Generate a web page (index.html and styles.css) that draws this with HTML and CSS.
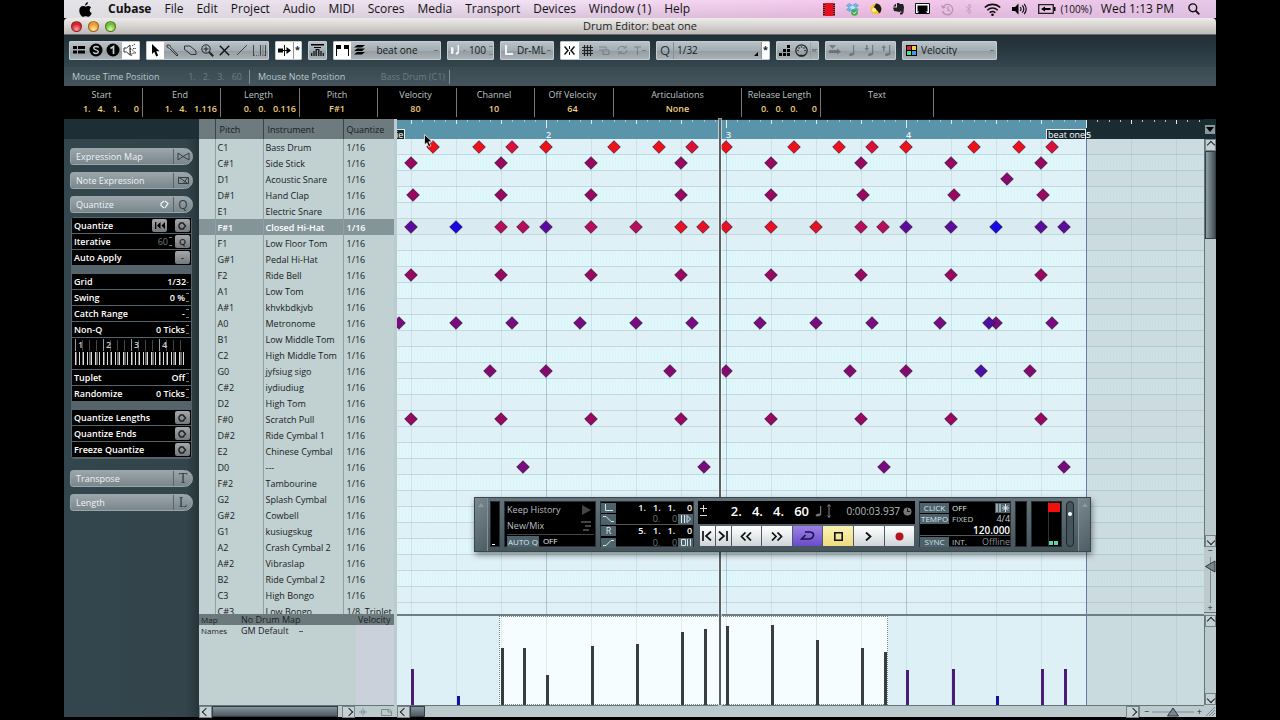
FILE: index.html
```html
<!DOCTYPE html>
<html lang="en">
<head>
<meta charset="utf-8">
<title>Drum Editor: beat one</title>
<link rel="stylesheet" href="styles.css">
</head>
<body>
<div class="desktop">
<header class="menubar">
  <svg class="apple" width="13" height="15" viewBox="0 0 13 15"><path d="M9 0C9 2 7.500 3.500 6 3.500 6 1.700 7.400.4 9 0ZM9.300 4c1.200 0 2.300.6 2.900 1.500-2.200 1.300-1.900 4.500.5 5.500C12 13 10.800 14.800 9.300 14.800c-1 0-1.400-.6-2.600-.6s-1.700.6-2.700.6C2.300 14.800.3 11.500.3 8.500.3 5.700 2 4 4 4c1.200 0 2 .7 2.800.7S8.300 4 9.300 4Z"/></svg>
  <nav class="menus">
    <button class="menu menu-app">Cubase</button><button class="menu">File</button><button class="menu">Edit</button><button class="menu">Project</button><button class="menu">Audio</button><button class="menu">MIDI</button><button class="menu">Scores</button><button class="menu">Media</button><button class="menu">Transport</button><button class="menu">Devices</button><button class="menu">Window (1)</button><button class="menu">Help</button>
  </nav>
  <div class="tray">
    <svg width="12" height="13" viewBox="0 0 12 13"><path fill="#500" d="M0 0h12v13H0z"/><path fill="#e5101c" d="M2 0h8v13H2z"/><path stroke="#f9b" stroke-dasharray="1 1" d="M1 0v13M11 0v13"/></svg>
    <svg width="13" height="13" viewBox="0 0 13 13"><path fill="#6fb9e8" stroke="#3b8cc4" stroke-width=".5" d="m3.500.5 3 2 3-2 3 2-2.800 2 2.800 2-3 2-3-2-3 2-3-2 2.800-2-2.800-2z"/><path fill="#bfe4f8" d="m6.500 2.500 3.200 2-3.200 2-3.200-2z"/><circle cx="8.500" cy="9.500" r="3.300" fill="#3aaf4a"/><path fill="none" stroke="#fff" d="m7 9.500 1.200 1.200L10.200 8.500"/></svg>
    <svg width="12" height="12" viewBox="0 0 12 12"><circle cx="6" cy="6" r="5.500" fill="#f3c52e"/><path d="M6 .5a5.500 5.500 0 0 1 3 10C8 7 5 6 4 4Z" fill="#1b1b1b"/><circle cx="4" cy="7" r="2" fill="#fff0a0"/></svg>
    <svg width="11" height="12" viewBox="0 0 11 12"><path fill="#222" d="M3 .5 0 3.500h3zM4 0h2l1 1h3l1 3-.5 5.500L9 11.500H7V9.500h1.500L8 8 6.500 9 4 8.500 1 8 0 4.500h4z"/></svg>
    <svg width="15" height="12" viewBox="0 0 15 12"><path fill="#fff" stroke="#111" d="M.5.5h14v10H.5z"/><path d="M2.500 2.500h10v6h-10zM2 11l2-2.500h7l2 2.500z"/></svg>
    <svg class="tray-off" width="13" height="13" viewBox="0 0 13 13"><g fill="none" stroke="#a58ba8" stroke-width="1.300"><path d="M2 4a5.200 5.200 0 1 1-.5 4M.5 2.500 2 5l2.500-1M7 3.500V7l2 1"/></g></svg>
    <svg class="tray-off" width="8" height="12" viewBox="0 0 8 12"><path fill="none" stroke="#b59ab8" d="m1 3 5 5.500L4 11V1l2 2.500L1 9"/></svg>
    <svg width="17" height="13" viewBox="0 0 17 13"><g fill="none" stroke="#111" stroke-width="1.600"><path d="M.8 4.500a11 11 0 0 1 15.400 0M3.300 7.200a7.400 7.400 0 0 1 10.400 0M5.700 9.700a4 4 0 0 1 5.600 0"/></g><circle cx="8.500" cy="11.700" r="1.300"/></svg>
    <svg width="15" height="12" viewBox="0 0 15 12"><path d="M0 4h3l3.500-3.500v11L3 8H0z"/><path fill="none" stroke="#111" stroke-width="1.200" d="M8.300 4q1.500 2 0 4M10.300 2.300q3 3.700 0 7.400M12.200.8q4 5.200 0 10.400"/></svg>
    <svg width="18" height="10" viewBox="0 0 18 10"><path fill="none" stroke="#222" stroke-width="1.300" d="M.7.7h14.600v8.600H.7z"/><path d="M16 3h1.500v4H16zM3 5l4-2.500V4h5.500v2H7v1.500z"/></svg>
    <span class="charge">(100%)</span>
    <time class="clock">Wed 1:13 PM</time>
    <svg width="12" height="12" viewBox="0 0 12 12"><circle cx="4.800" cy="4.800" r="3.900" fill="none" stroke="#111" stroke-width="1.400"/><path stroke="#111" stroke-width="1.800" d="m7.500 7.500 3.800 3.800"/></svg>
  </div>
</header>

<div class="titlebar">
  <div class="lights"><button class="light light-close" aria-label="Close"></button><button class="light light-min" aria-label="Minimise"></button><button class="light light-zoom" aria-label="Zoom"></button></div>
  <h1 class="title">Drum Editor: beat one</h1>
</div>

<div class="toolbar">
  <div class="group group-modes">
    <button class="tool" aria-label="Show info"><svg width="12" height="8" viewBox="0 0 12 8"><path d="M0 0h4v3H0zM5 0h7v3H5zM0 4.500h4v3H0zM5 4.500h7v3H5z"/></svg></button>
    <button class="tool" aria-label="Solo"><svg width="14" height="14" viewBox="0 0 14 14"><circle cx="7" cy="7" r="6.500"/><path fill="none" stroke="#c3ccd0" stroke-width="1.500" d="M9.600 4.700C8.500 3 4.700 3.300 4.800 5.200 4.900 7.200 9.400 6.600 9.300 8.800 9.200 10.900 5.200 11 4.300 9.200"/></svg></button>
    <button class="tool" aria-label="One"><svg width="14" height="14" viewBox="0 0 14 14"><circle cx="7" cy="7" r="6.500"/><path fill="none" stroke="#c3ccd0" stroke-width="1.700" d="M4.500 5.500 7.500 3.500v7.500"/></svg></button>
    <button class="tool tool-on" aria-label="Acoustic feedback"><svg width="14" height="14" viewBox="0 0 14 14"><g fill="none" stroke="#333"><path d="M1 5h2.500L7 2v10L3.500 9H1z"/><path d="m7 5 6 5H9.500L8 13zM9 3l3-2M10 5.500h3" stroke-dasharray="1.500 .8"/></g></svg></button>
  </div>
  <div class="group group-tools">
    <button class="tool tool-on" aria-label="Select"><svg width="9" height="13" viewBox="0 0 9 13"><path d="M1 0v10l2.300-2.200L5.200 12.500l2-1L5.200 7.300h3.300z"/></svg></button>
    <button class="tool" aria-label="Drumstick"><svg width="13" height="13" viewBox="0 0 13 13"><path fill="none" stroke="#333" d="M1 1h2.500L5 3.500l7 7.500-1 1L3.500 4.500 1 3z"/></svg></button>
    <button class="tool" aria-label="Erase"><svg width="14" height="11" viewBox="0 0 14 11"><path fill="none" stroke="#333" d="M1.500 1h5.500l6 5v3.500H8L1.500 4.500zM1.500 4.500V1"/></svg></button>
    <button class="tool" aria-label="Zoom tool"><svg width="13" height="13" viewBox="0 0 13 13"><circle cx="5" cy="5" r="4.200" fill="none" stroke="#222"/><path fill="none" stroke="#222" d="M2.500 5h5M5 2.500v5"/><path stroke="#222" stroke-width="2" d="m8.200 8.200 4 4"/></svg></button>
    <button class="tool" aria-label="Mute"><svg width="11" height="11" viewBox="0 0 11 11"><path stroke="#111" stroke-width="1.400" d="m.8.8 9.400 9.400M10.200.8.8 10.200"/></svg></button>
    <button class="tool" aria-label="Line"><svg width="10" height="10" viewBox="0 0 10 10"><path stroke="#444" d="M0 10 10 0"/></svg></button>
    <button class="tool" aria-label="Time warp"><svg width="13" height="11" viewBox="0 0 13 11"><path stroke="#444" d="M.5 0v11M7.500 0v11M12.500 0v11"/><path stroke="#777" d="M10 0v11"/><path stroke="#666" stroke-dasharray="1 1" d="M1 10.500h11"/></svg></button>
  </div>
  <div class="group group-scroll">
    <button class="tool tool-on tool-wide" aria-label="Autoscroll"><svg width="13" height="11" viewBox="0 0 13 11"><path d="M0 3.500h5v4H0zM8.500 2 13 5.500 8.500 9zM5 5h4v1H5z"/><path stroke="#111" d="M6.500 0v11"/></svg></button>
    <button class="tool tool-on tool-thin">*</button>
  </div>
  <div class="group group-one"><button class="tool" aria-label="Velocity range"><svg width="13" height="12" viewBox="0 0 13 12"><path d="M0 0h13v1.500H0zM3 3h7v1H3zM5 5h3v1H5z"/><path stroke="#111" stroke-width="1.300" d="M.7 12V9M3 12V7M5.200 12V5M7.800 12V5M10 12V7M12.300 12V9"/></svg></button></div>
  <div class="group group-part">
    <button class="tool tool-on" aria-label="Part borders"><svg width="13" height="11" viewBox="0 0 13 11"><path d="M0 0h5v4H1v7H0zM13 0H8v4h4v7h1z"/></svg></button>
    <button class="tool" aria-label="Active part only"><svg width="11" height="10" viewBox="0 0 11 10"><path d="M3 0h8L8 2.500H0zM3 3.500h8L8 6H0zM3 7h8L8 9.500H0z"/></svg></button>
    <select class="pick pick-center" aria-label="Part"><option>beat one</option></select>
  </div>
  <div class="group group-insert"><svg width="10" height="10" viewBox="0 0 10 10"><path fill="#f2f5f6" d="M7.500 0H9v8q-3 3-3.500.5Q6 6.500 7.500 7zM1 2v5q-1 2 1 2l1.500-.5V2.500z"/></svg><span class="dash">-</span><span class="num">100</span><span class="spin"></span></div>
  <div class="group group-color"><svg width="9" height="10" viewBox="0 0 9 10"><path fill="none" stroke="#f2f5f6" stroke-width="2" d="M2 0v9h7"/></svg><select class="pick" aria-label="Length quantize"><option>Dr-ML</option></select></div>
  <div class="group group-snap">
    <button class="tool tool-on" aria-label="Snap"><svg width="11" height="9" viewBox="0 0 11 9"><path fill="none" stroke="#111" stroke-width="1.500" d="M.5.5 4 4.500l-3.500 4M10.500.5 7 4.500l3.500 4"/><path stroke="#111" d="M5.500 0v3M5.500 6v3"/></svg></button>
    <button class="tool" aria-label="Grid"><svg width="11" height="11" viewBox="0 0 11 11"><path stroke="#222" stroke-width="1.200" d="M2.500 0v11M5.500 0v11M8.500 0v11M0 2.500h11M0 5.500h11M0 8.500h11"/></svg></button>
    <button class="tool tool-off" aria-label="Snap type"><svg width="11" height="9" viewBox="0 0 11 9"><path fill="none" stroke="#555" d="M4 4h6v4.500H4zM0 4h4M0 1h7v3"/></svg></button>
    <button class="tool tool-off" aria-label="Cycle snap"><svg width="11" height="10" viewBox="0 0 11 10"><path fill="none" stroke="#555" d="M1 5a4 3.500 0 0 1 7-2.500M10 5a4 3.500 0 0 1-7 2.500M6.500 3H9V.5M4.500 7H2v2.500"/></svg></button>
    <button class="tool tool-off" aria-label="Quantize type"><svg width="12" height="9" viewBox="0 0 12 9"><path fill="none" stroke="#555" d="M0 1h7M3.500 1v8M8 4.500h4"/></svg></button>
  </div>
  <div class="group group-quant"><span class="q">Q</span><select class="pick pick-flat" aria-label="Quantize preset"><option>1/32</option></select><svg class="corner" width="4" height="4" viewBox="0 0 4 4"><path d="M4 0v4H0z"/></svg><button class="tool tool-on tool-thin">*</button></div>
  <div class="group group-step">
    <button class="tool" aria-label="Step input"><svg width="12" height="11" viewBox="0 0 12 11"><path d="M0 8h3v3H0zM4 8h3v3H4zM8 8h3v3H8zM4 4h3v3H4zM8 4h3v3H8zM8 0h3v3H8z"/></svg></button>
    <button class="tool" aria-label="MIDI input"><svg width="13" height="13" viewBox="0 0 13 13"><circle cx="6.500" cy="6.500" r="5.700" fill="none" stroke="#222" stroke-width="1.200"/><path stroke="#222" stroke-width="1.500" stroke-linecap="round" d="M3 6.500h.1M4 4h.1M6.500 3h.1M9 4h.1M10 6.500h.1M5 11.500h3"/></svg></button>
    <button class="tool tool-thin tool-off" aria-label="Step options"><svg width="5" height="3" viewBox="0 0 5 3"><path fill="none" stroke="#333" d="M0 2.500V.5h2v2M3 2.500V.5h2"/></svg></button>
  </div>
  <div class="group group-notes">
    <button class="tool tool-off" aria-label="Record pitch"><svg width="12" height="10" viewBox="0 0 12 10"><path fill="#444" d="M0 0h7L3.500 4zM0 5h8V3.500L12 6.500 8 9.500V8H0z"/></svg></button>
    <button class="tool tool-off" aria-label="Note"><svg width="6" height="11" viewBox="0 0 6 11"><path fill="#444" d="M4 0h1.200v9.500Q0 12.500 0 9.500 1 7.500 4 8z"/></svg></button>
    <button class="tool tool-off" aria-label="Note down"><svg width="10" height="11" viewBox="0 0 10 11"><path fill="#444" d="M8 0h1.200v9.500Q4 12.500 4 9.500 5 7.500 8 8zM2 0h1.500v3H5L2.700 6 .5 3H2z"/></svg></button>
    <button class="tool tool-off" aria-label="Note up"><svg width="10" height="11" viewBox="0 0 10 11"><path fill="#444" d="M8 0h1.200v9.500Q4 12.500 4 9.500 5 7.500 8 8zM2 6h1.500V3H5L2.700 0 .5 3H2z"/></svg></button>
  </div>
  <div class="group group-colors"><svg width="11" height="11" viewBox="0 0 11 11"><path d="M0 0h11v11H0z"/><path fill="#d9232e" d="M1 1h4v4H1z"/><path fill="#f0d040" d="M6 1h4v4H6z"/><path fill="#48e087" d="M1 6h4v4H1z"/><path fill="#4098f0" d="M6 6h4v4H6z"/></svg><select class="pick" aria-label="Colors"><option>Velocity</option></select></div>
</div>

<div class="status">
  <div class="status-cell"><span>Mouse Time Position</span><span class="status-value">1.   2.   3.   60</span></div>
  <div class="status-cell status-note"><span>Mouse Note Position</span><span class="status-value">Bass Drum (C1)</span></div>
</div>

<dl class="info">
  <div class="cell"><dt>Start</dt><dd class="time">1.   4.   1.      0</dd></div>
  <div class="cell"><dt>End</dt><dd class="time">1.   4.   1.116</dd></div>
  <div class="cell"><dt>Length</dt><dd class="time">0.   0.   0.116</dd></div>
  <div class="cell"><dt>Pitch</dt><dd>F#1</dd></div>
  <div class="cell"><dt>Velocity</dt><dd>80</dd></div>
  <div class="cell"><dt>Channel</dt><dd>10</dd></div>
  <div class="cell"><dt>Off Velocity</dt><dd>64</dd></div>
  <div class="cell cell-wide"><dt>Articulations</dt><dd>None</dd></div>
  <div class="cell"><dt>Release Length</dt><dd class="time">0.   0.   0.      0</dd></div>
  <div class="cell cell-text"><dt>Text</dt><dd></dd></div>
</dl>

<main class="editor">
  <aside class="inspector">
    <div class="inspector-top"></div>
    <button class="pill"><span class="pill-name">Expression Map</span><span class="pill-icon"><svg width="13" height="9" viewBox="0 0 13 9"><path fill="none" stroke="#333f44" d="M1 1v7l5-3.500zM12 1v7L6 4.500z"/></svg></span></button>
    <button class="pill"><span class="pill-name">Note Expression</span><span class="pill-icon"><svg width="11" height="9" viewBox="0 0 11 9"><path fill="none" stroke="#333f44" d="M.5 1.500h10v6H.5zM.5 1l10 7M5 8l5-7"/></svg></span></button>
    <button class="pill"><span class="pill-name">Quantize</span><svg width="9" height="9" viewBox="0 0 9 9"><path fill="none" stroke="#f2f6f7" stroke-width="1.200" d="M4 1 1 3.500v2L4 8M5 1l3 2.500L5 8"/></svg><span class="pill-icon pill-sans">Q</span></button>
    <div class="panel">
      <div class="block">
        <div class="row"><span>Quantize</span><button class="mini mini-wide" aria-label="Reset"><svg width="10" height="7" viewBox="0 0 10 7"><path d="M0 0h1.300v7H0zM5.500 0v7L2 3.500zM10 0v7L6.500 3.500z"/></svg></button><button class="mini mini-gap" aria-label="Apply quantize"><svg width="9" height="8" viewBox="0 0 9 8"><path fill="none" stroke="#222" stroke-width="1.500" d="M2.500 1H5l2.500 3L5 7H2.500L1 5V3z"/></svg></button></div>
        <div class="row"><span>Iterative</span><span class="val dim">60</span><span class="spin"></span><button class="mini">Q</button></div>
        <div class="row"><span>Auto Apply</span><button class="mini mini-last">-</button></div>
      </div>
      <div class="block">
        <div class="row"><span>Grid</span><span class="val">1/32</span><span class="tick">-</span></div>
        <div class="row"><span>Swing</span><span class="val">0 %</span><span class="spin"></span></div>
        <div class="row"><span>Catch Range</span><span class="val">-</span><span class="spin"></span></div>
        <div class="row"><span>Non-Q</span><span class="val">0 Ticks</span><span class="spin"></span></div>
        <div class="beats"><span>1</span><span>2</span><span>3</span><span>4</span></div>
        <div class="row"><span>Tuplet</span><span class="val">Off</span><span class="spin"></span></div>
        <div class="row"><span>Randomize</span><span class="val">0 Ticks</span><span class="spin"></span></div>
      </div>
      <div class="block">
        <div class="row"><span>Quantize Lengths</span><button class="mini mini-last" aria-label="Quantize lengths"><svg width="9" height="8" viewBox="0 0 9 8"><path fill="none" stroke="#222" stroke-width="1.500" d="M2.500 1H5l2.500 3L5 7H2.500L1 5V3z"/></svg></button></div>
        <div class="row"><span>Quantize Ends</span><button class="mini mini-last" aria-label="Quantize ends"><svg width="9" height="8" viewBox="0 0 9 8"><path fill="none" stroke="#222" stroke-width="1.500" d="M2.500 1H5l2.500 3L5 7H2.500L1 5V3z"/></svg></button></div>
        <div class="row"><span>Freeze Quantize</span><button class="mini mini-last" aria-label="Freeze quantize"><svg width="9" height="8" viewBox="0 0 9 8"><path fill="none" stroke="#222" stroke-width="1.500" d="M2.500 1H5l2.500 3L5 7H2.500L1 5V3z"/></svg></button></div>
      </div>
    </div>
    <button class="pill pill-after"><span class="pill-name">Transpose</span><span class="pill-icon">T</span></button>
    <button class="pill"><span class="pill-name">Length</span><span class="pill-icon">L</span></button>
  </aside>

  <section class="drums">
    <div class="list">
    <table class="map">
      <thead><tr><th class="c-on"></th><th class="c-pitch">Pitch</th><th class="c-name">Instrument</th><th>Quantize</th></tr></thead>
      <tbody>
        <tr><td></td><td>C1</td><td>Bass Drum</td><td>1/16</td></tr>
        <tr><td></td><td>C#1</td><td>Side Stick</td><td>1/16</td></tr>
        <tr><td></td><td>D1</td><td>Acoustic Snare</td><td>1/16</td></tr>
        <tr><td></td><td>D#1</td><td>Hand Clap</td><td>1/16</td></tr>
        <tr><td></td><td>E1</td><td>Electric Snare</td><td>1/16</td></tr>
        <tr class="selected"><td></td><td>F#1</td><td>Closed Hi-Hat</td><td>1/16</td></tr>
        <tr><td></td><td>F1</td><td>Low Floor Tom</td><td>1/16</td></tr>
        <tr><td></td><td>G#1</td><td>Pedal Hi-Hat</td><td>1/16</td></tr>
        <tr><td></td><td>F2</td><td>Ride Bell</td><td>1/16</td></tr>
        <tr><td></td><td>A1</td><td>Low Tom</td><td>1/16</td></tr>
        <tr><td></td><td>A#1</td><td>khvkbdkjvb</td><td>1/16</td></tr>
        <tr><td></td><td>A0</td><td>Metronome</td><td>1/16</td></tr>
        <tr><td></td><td>B1</td><td>Low Middle Tom</td><td>1/16</td></tr>
        <tr><td></td><td>C2</td><td>High Middle Tom</td><td>1/16</td></tr>
        <tr><td></td><td>G0</td><td>jyfsiug sigo</td><td>1/16</td></tr>
        <tr><td></td><td>C#2</td><td>iydiudiug</td><td>1/16</td></tr>
        <tr><td></td><td>D2</td><td>High Tom</td><td>1/16</td></tr>
        <tr><td></td><td>F#0</td><td>Scratch Pull</td><td>1/16</td></tr>
        <tr><td></td><td>D#2</td><td>Ride Cymbal 1</td><td>1/16</td></tr>
        <tr><td></td><td>E2</td><td>Chinese Cymbal</td><td>1/16</td></tr>
        <tr><td></td><td>D0</td><td>---</td><td>1/16</td></tr>
        <tr><td></td><td>F#2</td><td>Tambourine</td><td>1/16</td></tr>
        <tr><td></td><td>G2</td><td>Splash Cymbal</td><td>1/16</td></tr>
        <tr><td></td><td>G#2</td><td>Cowbell</td><td>1/16</td></tr>
        <tr><td></td><td>G1</td><td>kusiugskug</td><td>1/16</td></tr>
        <tr><td></td><td>A2</td><td>Crash Cymbal 2</td><td>1/16</td></tr>
        <tr><td></td><td>A#2</td><td>Vibraslap</td><td>1/16</td></tr>
        <tr><td></td><td>B2</td><td>Ride Cymbal 2</td><td>1/16</td></tr>
        <tr><td></td><td>C3</td><td>High Bongo</td><td>1/16</td></tr>
        <tr><td></td><td>C#3</td><td>Low Bongo</td><td>1/8, Triplet</td></tr>
      </tbody>
    </table>
    </div>
    <div class="setup">
      <div class="setup-row setup-head"><span class="setup-key">Map</span><span class="setup-val">No Drum Map</span><span>Velocity</span></div>
      <div class="setup-body">
        <div class="setup-main"><label class="setup-key" for="names">Names</label><select class="names" id="names"><option>GM Default</option></select></div>
        <div class="setup-lane"></div>
      </div>
    </div>
    <div class="hbar">
      <button class="arrow arrow-left" aria-label="Scroll list left"></button><div class="thumb thumb-list"></div><button class="arrow arrow-right" aria-label="Scroll list right"></button>
      <div class="lane-tools"><svg width="8" height="8" viewBox="0 0 8 8"><path fill="none" stroke="#8a9da0" d="M4 0v8M0 4h8M2.500 2v4M5.500 2v4"/></svg><svg width="11" height="8" viewBox="0 0 11 8"><path fill="none" stroke="#7a8c90" d="M.5 1.500h8l2 2v4H.5zM7 1.500V4h3"/></svg></div>
    </div>
  </section>

  <section class="canvas">
    <div class="ruler" id="ruler"><span class="part-tag part-cut">ie</span><span class="part-tag part-end">beat one</span></div>
    <div class="lanes" id="lanes"></div>
    <div class="velocity" id="velocity"></div>
    <div class="hbar hbar-main">
      <button class="arrow arrow-left" aria-label="Scroll left"></button><div class="thumb thumb-main"></div><div class="hfill"></div><button class="arrow arrow-right" aria-label="Scroll right"></button>
      <div class="zoom-h"><span>−</span><svg width="42" height="10" viewBox="0 0 42 10"><path stroke="#7d8b90" d="M0 5h42"/><path fill="#79868b" stroke="#2e383c" d="M21 1 26.500 9h-11z"/></svg><span>+</span></div>
    </div>
    <div class="playhead"></div>
    <svg class="cursor" width="9" height="14" viewBox="0 0 9 14"><path stroke="#fff" stroke-width=".7" d="M.5.5v10.500l2.300-2.300L4.800 13l2-1-2-4.200h3.400z"/></svg>

    <div class="transport">
      <div class="handle"></div>
      <div class="meter meter-in"></div>
      <div class="box modes">
        <div class="mode"><span>Keep History</span><svg width="9" height="10" viewBox="0 0 9 10"><path fill="#444" d="M0 0 9 5 0 10z"/></svg></div>
        <div class="mode"><span>New/Mix</span><svg width="10" height="10" viewBox="0 0 10 10"><path fill="#444" d="M0 0h10v2H0zM4 4h6v2H4zM2 8h6v2H2z"/></svg></div>
        <div class="mode mode-auto"><button class="chip">AUTO Q</button><span class="white">OFF</span></div>
      </div>
      <div class="box locators">
        <div class="loc"><span class="tile"><svg width="8" height="7" viewBox="0 0 8 7"><path fill="none" stroke="#dbe6ea" d="M.5 0v6.500H8"/></svg></span><span class="loc-val">1.   1.   1.     0</span></div>
        <div class="loc dim"><span class="tile"><svg width="11" height="6" viewBox="0 0 11 6"><path fill="none" stroke="#dbe6ea" d="M0 .5h3l5 5h3"/></svg></span><span class="loc-val">0.     0</span><span class="tile"><svg width="10" height="8" viewBox="0 0 10 8"><path fill="none" stroke="#dbe6ea" d="M.5 0v8M3.500 0v8M6 .5v7L9.500 4z"/></svg></span></div>
        <div class="loc loc-right"><span class="tile">R</span><span class="loc-val">5.   1.   1.     0</span></div>
        <div class="loc dim"><span class="tile"><svg width="11" height="6" viewBox="0 0 11 6"><path fill="none" stroke="#dbe6ea" d="M0 5.500h3l5-5h3"/></svg></span><span class="loc-val">0.     0</span><span class="tile"><svg width="10" height="7" viewBox="0 0 10 7"><path fill="none" stroke="#dbe6ea" d="M.5.500h4v6h-4zM6.500 0v7M9.500 0v7"/></svg></span></div>
      </div>
      <div class="center">
        <div class="time-row"><svg width="7" height="17" viewBox="0 0 7 17"><path stroke="#ddd" d="M0 5.500h7M3.500 2v7M0 12.500h7"/></svg><span class="big">2.   4.   4.   60</span><svg width="17" height="16" viewBox="0 0 17 16"><path fill="#777" d="M5 3h1.200v9Q1 15 .5 12 2 10 5 10.500z"/><path fill="none" stroke="#888" d="M14 2v12M12.500 3.500 14 1.500l1.500 2M12.500 12.500l1.500 2 1.500-2"/></svg><span class="secs">0:00:03.937</span><svg width="9" height="9" viewBox="0 0 9 9"><circle cx="4.500" cy="4.500" r="4" fill="#777"/><path fill="none" stroke="#111" d="M4.500 1.500v3H7"/></svg></div>
        <div class="keys">
          <button class="key key-half" aria-label="To start"><svg width="10" height="10" viewBox="0 0 10 10"><path fill="none" stroke="#111" stroke-width="1.700" d="M1 0v10M9 .5 4 5l5 4.500"/></svg></button>
          <button class="key key-half" aria-label="To end"><svg width="10" height="10" viewBox="0 0 10 10"><path fill="none" stroke="#111" stroke-width="1.700" d="M9 0v10M1 .5 6 5 1 9.500"/></svg></button>
          <button class="key" aria-label="Rewind"><svg width="12" height="9" viewBox="0 0 12 9"><path fill="none" stroke="#111" stroke-width="1.700" d="M5.500.5l-4 4 4 4M11 .5l-4 4 4 4"/></svg></button>
          <button class="key" aria-label="Forward"><svg width="12" height="9" viewBox="0 0 12 9"><path fill="none" stroke="#111" stroke-width="1.700" d="m1 .5 4 4-4 4M6.500.5l4 4-4 4"/></svg></button>
          <button class="key key-cycle" aria-label="Cycle"><svg width="15" height="10" viewBox="0 0 15 10"><path fill="none" stroke="#17104a" stroke-width="1.500" d="M5 1h5q4 .5 3.500 3.500Q12.500 8 9 8H1.500L5.500 4"/></svg></button>
          <button class="key key-stop" aria-label="Stop"><svg width="9" height="9" viewBox="0 0 9 9"><path fill="none" stroke="#111" stroke-width="1.600" d="M.8.8h7.400v7.400H.8z"/></svg></button>
          <button class="key" aria-label="Play"><svg width="7" height="9" viewBox="0 0 7 9"><path fill="none" stroke="#111" stroke-width="1.800" d="m1 .5 4.500 4L1 8.500"/></svg></button>
          <button class="key" aria-label="Record"><svg width="9" height="9" viewBox="0 0 9 9"><circle cx="4.500" cy="4.500" r="4" fill="#b5121f"/></svg></button>
        </div>
      </div>
      <div class="box sync">
        <div class="sync-row"><button class="chip">CLICK</button><span class="white">OFF</span><span class="tile sync-end"><svg width="13" height="8" viewBox="0 0 13 8"><path stroke="#dbe6ea" d="M1 0v8M4 0v8M9.500 0v8M6 4h7M7 1.500l5 5M12 1.500l-5 5"/></svg></span></div>
        <div class="sync-row"><button class="chip">TEMPO</button><span class="soft">FIXED</span><span class="sync-end soft">4/4</span></div>
        <div class="sync-row"><span class="sync-end tempo">120.000</span></div>
        <div class="sync-row sync-last"><button class="chip">SYNC</button><span class="soft">INT.</span><span class="sync-end off">Offline</span></div>
      </div>
      <div class="meter meter-mid"></div>
      <div class="meter meter-out"><span class="clip"></span><span class="level"></span></div>
      <div class="fader"><span class="knob"></span></div>
      <div class="handle handle-right"></div>
    </div>
  </section>

  <div class="vbars">
    <button class="ruler-menu" aria-label="Ruler format"><svg width="8" height="5" viewBox="0 0 8 5"><path d="M0 0h8L4 5z"/></svg></button>
    <div class="vbar vbar-tall"><button class="arrow arrow-up" aria-label="Scroll up"></button><div class="vthumb"></div><div class="vfill"></div><button class="arrow arrow-down" aria-label="Scroll down"></button></div>
    <div class="zoom-v"><span>−</span><svg width="11" height="46" viewBox="0 0 11 46"><path stroke="#7d8b90" d="M5.500 0v46"/><path fill="#79868b" stroke="#2e383c" d="M.5 9.500 10 4v11z"/></svg><span>+</span></div>
    <div class="vbar vbar-low"><button class="arrow arrow-up" aria-label="Scroll velocity up"></button><div class="vfill"></div><button class="arrow arrow-down" aria-label="Scroll velocity down"></button></div>
    <div class="grip"><svg width="9" height="9" viewBox="0 0 9 9"><path stroke="#76858a" d="M0 9 9 0M3 9l6-6M6 9l3-3"/></svg></div>
  </div>
</main>
</div>
<script src="app.js"></script>
</body>
</html>
```
FILE: styles.css
```css
* { box-sizing: border-box; }
body {
  margin: 0;
  background: #000;
  font-family: "Open Sans", "Noto Sans", sans-serif;
  font-size: 9px;
  line-height: 12px;
  color: #1a2226;
}
button, select { font: inherit; color: inherit; border: 0; padding: 0; margin: 0; background: none; }
select { appearance: none; border-radius: 0; }
svg { display: block; flex: none; }

.desktop {
  height: 100vh;
  margin: 0 5%;
  padding-bottom: 3px;
  display: flex;
  flex-direction: column;
}

/* Menu bar */
.menubar {
  height: 18px;
  flex: none;
  display: flex;
  align-items: center;
  padding: 0 16px 0 15px;
  background: linear-gradient(90deg, rgba(225, 225, 228, .9), rgba(233, 200, 236, .4) 42%, rgba(240, 170, 224, .6) 70%, rgba(225, 190, 228, .8)), linear-gradient(#fbf3fb, #cfc3d0);
  color: #111;
  font-size: 12px;
  line-height: 16px;
}
.menus { display: flex; gap: 13px; margin-left: 16px; }
.menu { white-space: nowrap; }
.menu-app { font-weight: 700; }
.tray { margin-left: auto; display: flex; align-items: center; gap: 11px; }
.tray-off { opacity: .8; }
.charge { font-size: 10px; margin-left: -6px; }
.clock { margin: 0 3px 0 -2px; white-space: nowrap; }

.titlebar {
  height: 17px;
  flex: none;
  display: grid;
  grid-template-columns: 1fr auto 1fr;
  align-items: center;
  padding: 0 7px;
  background: linear-gradient(#eeecea, #bdb9b7);
  border-radius: 4px 4px 0 0;
  border-bottom: 1px solid #6b6b6b;
}
.lights { display: flex; gap: 6px; }
.light { width: 11px; height: 11px; border-radius: 50%; border: 1px solid rgba(60, 30, 20, .5); }
.light-close { background: radial-gradient(circle at 50% 80%, #ff9c9c, #d7222f 60%); }
.light-min { background: radial-gradient(circle at 50% 80%, #ffe79a, #ee9a30 60%); }
.light-zoom { background: radial-gradient(circle at 50% 80%, #d8ffa4, #6cbf36 60%); }
.title { margin: 0; font-size: 11px; line-height: 14px; font-weight: 400; color: #222; }

/* Toolbar */
.toolbar {
  height: 32px;
  flex: none;
  display: flex;
  align-items: center;
  gap: 6px;
  padding: 0 5px 2px;
  background: linear-gradient(#202e35, #34464e);
}
.group {
  height: 19px;
  display: flex;
  align-items: center;
  background: linear-gradient(#b9c2c6, #a3adb2 50%, #929ca1 52%, #a9b2b6);
  border: 1px solid #c3cccf;
  border-radius: 1px;
  color: #15191b;
}
.tool { flex: 1; height: 17px; display: flex; align-items: center; justify-content: center; }
.tool-on { background: #fff; }
.tool-off { opacity: .5; }
.tool-thin { flex: 0 0 8px; border-left: 1px solid #8c969a; font-weight: 700; }
.group-modes { width: 71px; }
.group-tools { width: 123px; }
.group-scroll { width: 27px; }
.group-one { width: 19px; }
.group-part { width: 108px; }
.group-part .tool { flex: 0 0 17px; }
.group-insert { width: 47px; padding-left: 2px; gap: 3px; }
.group-color { width: 54px; padding-left: 3px; gap: 4px; }
.group-snap { width: 90px; }
.group-quant { width: 114px; }
.group-step { width: 43px; }
.group-notes { width: 71px; }
.group-colors { width: 95px; padding-left: 3px; gap: 4px; }
.pick {
  flex: 1;
  min-width: 0;
  height: 17px;
  font-size: 10px;
  background: linear-gradient(#68757b, #68757b) right 2px center / 4px 1px no-repeat;
}
.pick-center { padding-right: 14px; text-align: center; text-align-last: center; }
.pick-flat { background: none; padding-left: 3px; border-left: 1px solid #848f94; }
.q { width: 16px; text-align: center; font-size: 13px; color: #2c3438; }
.corner { align-self: flex-end; margin: 0 3px 3px; }
.num { font-size: 10px; }
.dash { color: #667; }
.spin { width: 4px; height: 9px; border: solid #7b868a; border-width: 1px 0; margin-left: auto; }

/* Status and info lines */
.status {
  height: 19px;
  flex: none;
  display: flex;
  align-items: center;
  background: linear-gradient(#3a4b52, #43555b);
  color: #b9c9ce;
}
.status-cell { width: 186px; height: 14px; display: flex; align-items: center; justify-content: space-between; padding: 0 7px 0 8px; border-right: 1px solid #7f9096; white-space: pre; }
.status-note { width: 200px; padding-right: 4px; }
.status-value { color: #6d7d83; }
.info {
  height: 33px;
  flex: none;
  display: flex;
  align-items: center;
  margin: 0;
  background: #000;
}
.cell { width: 78px; flex: 0 1 auto; height: 29px; border-right: 1px solid #777; text-align: center; padding-right: 3px; }
.cell:nth-child(odd) { width: 79px; }
.cell.cell-wide { width: 128px; padding-right: 0; }
.cell.cell-text { width: 113px; padding-right: 0; }
.cell dt { color: #bcc5c8; line-height: 13px; white-space: nowrap; }
.cell dd { margin: 0; color: #f0cf80; font-weight: 600; line-height: 16px; white-space: pre; }
.cell dd.time { text-align: right; }

/* Editor body */
.editor { flex: 1; min-height: 0; display: flex; background: #33444b; }
.inspector { width: 135px; flex: none; padding: 0 6px; overflow: hidden; background: linear-gradient(90deg, #34464d, #33444b 90%, #26353b); color: #eef3f4; }
.inspector-top { height: 20px; margin: 0 -6px 9px; background: #1d2e35; }
.pill {
  display: flex;
  align-items: center;
  width: 100%;
  height: 17px;
  margin-bottom: 7px;
  padding-left: 5px;
  border-radius: 3px 9px 9px 3px;
  border: 1px solid #9aa5a9;
  background: linear-gradient(#9ba6aa, #79868b);
  color: #eef4f5;
}
.pill-name { flex: 1; text-align: left; }
.pill-icon { width: 19px; height: 15px; margin-left: 4px; border-left: 1px solid #566368; display: flex; align-items: center; justify-content: center; color: #333f44; font: 14px/15px "Liberation Serif", serif; }
.pill-sans { font: 12px/14px "Open Sans", sans-serif; }
.pill-after { margin-top: 11px; }
.panel { margin: -3px 1px 0; background: #55646a; border-radius: 4px; padding: 1px; font-weight: 600; color: #fff; }
.block { background: #55646a; margin-bottom: 9px; }
.block:last-child { margin-bottom: 0; }
.row { height: 15px; margin-bottom: 1px; display: flex; align-items: center; padding: 0 2px 0 2px; background: #000; white-space: nowrap; }
.val { margin-left: auto; }
.row .spin { margin-left: 1px; width: 3px; border-color: #777; }
.tick { color: #777; }
.dim { color: #777; font-weight: 400; }
.mini { width: 15px; height: 13px; margin-left: 3px; margin-right: -1px; border-radius: 2px; background: linear-gradient(#a4a8aa, #75797b); color: #222; display: flex; align-items: center; justify-content: center; }
.mini-wide { margin-left: auto; }
.mini-gap { margin-left: 9px; }
.mini-last { margin-left: auto; }
.beats {
  height: 31px;
  margin-bottom: 1px;
  padding: 1px 2px 0 3px;
  display: flex;
  color: #ccc;
  background:
    repeating-linear-gradient(90deg, #ddd 0 1px, transparent 1px 4px) 3px 14px / 112px 13px no-repeat,
    repeating-linear-gradient(90deg, #666 0 2px, transparent 2px 7px) 3px 14px / 112px 13px no-repeat,
    repeating-linear-gradient(90deg, #444 0 1px, transparent 1px 7px) 3px 2px / 112px 11px no-repeat,
    #000;
}
.beats span { width: 28px; padding-left: 2px; border-left: 1px solid #999; height: 12px; }

.drums { width: 198px; flex: none; display: flex; flex-direction: column; background: #c1d0d0; border-right: 3px solid #bccbcd; }
.list { flex: 1; min-height: 0; overflow: hidden; }
.map { width: 100%; table-layout: fixed; border-collapse: collapse; color: #151b1d; }
.map th { height: 20px; padding: 2px 0 0 4px; background: #6d7a7e; border-right: 1px solid #3a4548; text-align: left; font-weight: 400; }
.map td { height: 16px; padding: 1px 0 0 2px; line-height: 12px; border-right: 1px solid #91a0a2; white-space: nowrap; }
.map th:last-child, .map td:last-child { border-right: 0; padding-left: 3px; }
.c-on { width: 16px; }
.c-pitch { width: 48px; }
.c-name { width: 80px; }
.selected td { background: #84959a; color: #fff; font-weight: 600; }
.setup { height: 91px; display: flex; flex-direction: column; flex: none; }
.setup-row { display: flex; align-items: center; height: 11px; padding-left: 2px; }
.setup-head { background: #6c797c; }
.setup-key { width: 40px; font-size: 8px; }
.setup-val { width: 117px; }
.setup-body { flex: 1; display: flex; }
.setup-main { flex: 1; display: flex; align-items: flex-start; padding-left: 2px; }
.names { width: 62px; background: linear-gradient(#556, #556) right center / 4px 1px no-repeat; }
.setup-lane { width: 38px; background: #cbd1db; }

/* Scroll bars */
.hbar { height: 12px; flex: none; display: flex; background: #bdcacd; border-top: 1px solid #66757a; }
.arrow { width: 13px; height: 12px; flex: none; display: flex; align-items: center; justify-content: center; background: #c6d1d4; border: 1px solid #77858a; }
.arrow::before { content: ""; width: 5px; height: 5px; border: solid #222; border-width: 1px 0 0 1px; transform: rotate(-45deg); }
.arrow-right::before { transform: rotate(135deg); }
.arrow-up::before { transform: rotate(45deg); }
.arrow-down::before { transform: rotate(225deg); }
.thumb { background: linear-gradient(#85949a, #4c5b62); border: 1px solid #333f44; }
.thumb-list { flex: 1; margin-right: 4px; }
.thumb-main { width: 15px; }
.hfill { flex: 1; }
.lane-tools { width: 39px; display: flex; align-items: center; justify-content: space-between; padding: 0 2px 0 4px; }
.zoom-h { width: 65px; display: flex; align-items: center; justify-content: space-between; padding: 0 2px 0 4px; border-left: 1px solid #77858a; }

/* Note canvas */
.canvas { flex: 1; min-width: 0; position: relative; display: flex; flex-direction: column; }
.ruler { height: 20px; flex: none; position: relative; overflow: hidden; background: linear-gradient(90deg, #5a94aa 85.400%, #1b2b32 85.400%); border-top: 1px solid #0c1418; color: #e6f1f4; }
.tickmark { position: absolute; top: 0; width: 1px; height: 2px; background: #a9c8d2; }
.tickmark-beat { height: 4px; background: #dcebef; }
.tickmark-bar { height: 8px; }
.bar-no { position: absolute; top: 9px; font-weight: 600; line-height: 11px; }
.part-tag { position: absolute; bottom: 0; height: 10px; padding: 0 1px; background: #15242b; border: 1px solid #e7eff1; border-bottom: 0; color: #fff; line-height: 9px; }
.part-cut { left: -3px; }
.part-end { right: 14.600%; z-index: 1; padding: 0 0 0 1px; }
.lanes { flex: 1; min-height: 0; position: relative; overflow: hidden; }
.lane { height: 16px; background: #dff0f6; border-bottom: 1px solid #c2d8dd; }
.lane-sharp { background: repeating-linear-gradient(90deg, #e0f8fc 0 2px, #dcf4f8 2px 3px); }
.lane-selected { background: #d9eaf0; }
.beyond { position: absolute; top: 0; bottom: 0; left: 85.400%; right: 0; background: rgba(150, 165, 165, .28); border-left: 1px solid #6f76a4; }
.gridline { position: absolute; top: 0; bottom: 0; width: 1px; background: rgba(110, 150, 160, .16); }
.gridline-bar { background: rgba(90, 130, 140, .38); }
.note { position: absolute; margin-left: -7px; }
.velocity { height: 91px; flex: none; position: relative; overflow: hidden; background: #ddf0f6; border-top: 2px solid #6e7f84; }
.marquee { position: absolute; left: 12.600%; width: 48.200%; top: 0; bottom: 0; background: #f5fdfe; border: 1px dotted #7b878a; }
.stem { position: absolute; bottom: 0; width: 3px; margin-left: -1px; background: #363f40; }
.stem-purple { background: #4b1d79; }
.stem-blue { background: #12129c; }
.playhead { position: absolute; top: 0; bottom: 12px; left: 39.900%; width: 2px; background: #5b5f60; outline: 1px solid rgba(240, 250, 250, .6); }
.cursor { position: absolute; left: 3.300%; top: 15px; }

/* Transport panel */
.transport {
  position: absolute;
  left: 9.550%;
  top: 378px;
  height: 55px;
  display: flex;
  gap: 4px;
  align-items: stretch;
  padding: 3px 0 4px;
  background: linear-gradient(#64737a, #46545b);
  border: 1px solid #39464c;
  box-shadow: 1px 3px 6px rgba(0, 0, 0, .45);
  color: #b8bfc2;
}
.handle { width: 13px; margin: -3px 0 -4px; border-right: 1px solid #83929a; background: linear-gradient(135deg, #7a898f, #4e5c63); }
.handle::before { content: ""; display: block; margin: 5px 3px; border: 3px solid transparent; border-top: 0; border-bottom: 4px solid #8c9aa0; }
.handle-right { width: 12px; border-right: 0; border-left: 1px solid #83929a; }
.meter { background: #000; border: 1px solid #222b2f; }
.meter-in { width: 10px; margin-left: -2px; display: flex; align-items: flex-end; }
.meter-in::after { content: ""; width: 3px; height: 1px; margin: 1px; background: #fff; }
.meter-mid { width: 12px; }
.meter-out { width: 31px; display: flex; flex-direction: column; justify-content: space-between; align-items: flex-end; padding: 1px; background: linear-gradient(#333, #333) 16px 0 / 1px 100% no-repeat, #000; }
.clip { width: 12px; height: 9px; background: #f01010; }
.level { width: 9px; height: 4px; margin-right: 2px; background: linear-gradient(90deg, #58d6b0 4px, #000 4px 5px, #58d6b0 5px); }
.fader { width: 8px; border-radius: 4px; border: 1px solid #1d262a; background: #46555b; }
.knob { display: block; width: 4px; height: 4px; margin: 10px 1px; border-radius: 50%; background: #fff; }
.box { background: #000; border: 1px solid #27323a; }
.modes { width: 92px; padding: 0 1px 1px 2px; }
.mode { height: 16px; display: flex; align-items: center; justify-content: space-between; padding: 0 3px 0 0; }
.mode.mode-auto { height: 13px; justify-content: flex-start; gap: 4px; border-top: 1px solid #444; }
.chip { height: 11px; padding: 0 1px; background: #4d626b; color: #dbe6ea; line-height: 11px; font-size: 8px; }
.white { color: #e8eef0; font-size: 8px; }
.soft { color: #c3cbce; font-size: 8px; }
.locators { width: 94px; }
.loc { height: 11px; display: flex; align-items: center; }
.loc-right { border-top: 1px solid #555; height: 13px; }
.tile { width: 15px; height: 10px; display: flex; align-items: center; justify-content: center; background: #4d626b; color: #dbe6ea; flex: none; }
.loc-val { flex: 1; text-align: right; white-space: pre; padding-right: 1px; line-height: 10px; }
.loc:not(.dim) .loc-val { color: #fff; font-weight: 600; }
.center { width: 217px; display: flex; flex-direction: column; gap: 2px; }
.time-row { height: 23px; background: #000; display: flex; align-items: center; gap: 3px; padding: 0 3px 3px 2px; }
.big { flex: 1; text-align: right; padding-right: 3px; font-size: 13px; line-height: 18px; font-weight: 600; color: #fff; white-space: pre; }
.secs { width: 65px; text-align: right; font-size: 10px; }
.keys { display: flex; gap: 1px; padding: 0 1px 0 2px; height: 20px; }
.key { flex: 2; display: flex; align-items: center; justify-content: center; background: linear-gradient(#fff, #e8ebed 50%, #cfd4d7); }
.key-half { flex: 1; }
.key-cycle { background: linear-gradient(#9c82e6, #6a4cc9); }
.key-stop { background: linear-gradient(#fbf3b4, #efdc7c); }
.sync { width: 92px; }
.sync-row { height: 11px; display: flex; align-items: center; gap: 3px; }
.sync-row .chip { width: 29px; padding: 0; flex: none; height: 10px; line-height: 10px; text-align: center; }
.sync-row .sync-end { margin-left: auto; }
.sync-end.soft { font-size: 9px; }
.tempo { color: #fff; font-weight: 600; font-size: 10px; }
.sync-last { height: 13px; border-top: 1px solid #555; }
.off { color: #878e91; font-size: 9px; }

.vbars { width: 12px; flex: none; display: flex; flex-direction: column; background: #bdcacd; }
.ruler-menu { height: 20px; flex: none; background: #1b2b32; display: flex; align-items: center; justify-content: center; }
.ruler-menu svg { padding: 2px 1px; background: #8a999e; box-sizing: content-box; }
.vbar { display: flex; flex-direction: column; border-left: 1px solid #66757a; }
.vbar .arrow { width: 11px; }
.vbar-tall { flex: 1; min-height: 0; }
.vbar-low { height: 90px; }
.vthumb { height: 88px; flex: none; background: linear-gradient(90deg, #92a0a5, #424f55); border: 1px solid #333f44; }
.vfill { flex: 1; }
.zoom-v { height: 66px; display: flex; flex-direction: column; align-items: center; justify-content: space-between; line-height: 8px; border-bottom: 1px solid #66757a; margin-bottom: 2px; }
.grip { height: 12px; display: flex; align-items: center; justify-content: center; }
```
FILE: app.js
```js
// Horizontal positions are in units of the visible span of the note display.
const SPAN = 807;
const pct = (x) => (x / SPAN) * 100 + '%';
const add = (parent, cls, x) => {
  const el = document.createElement('div');
  el.className = cls;
  el.style.left = pct(x);
  parent.appendChild(el);
  return el;
};

const ruler = document.getElementById('ruler');
const lanes = document.getElementById('lanes');
const velocity = document.getElementById('velocity');

const LANES = 30;
const SHARP = [1, 3, 7, 9, 11, 13, 15, 19, 21, 23, 25, 27];
for (let i = 0; i < LANES; i++) {
  const lane = document.createElement('div');
  lane.className = 'lane' + (SHARP.includes(i) ? ' lane-sharp' : '') + (i === 5 ? ' lane-selected' : '');
  lanes.appendChild(lane);
}

const marquee = document.createElement('div');
marquee.className = 'marquee';
velocity.appendChild(marquee);

// Beats are 45 units apart; bar 2 starts at 149.
for (let b = -3; b < 15; b++) {
  const x = 149 + b * 45;
  const bar = b % 4 === 0;
  add(ruler, 'tickmark tickmark-beat' + (bar ? ' tickmark-bar' : ''), x);
  for (let s = 1; s < 4; s++) add(ruler, 'tickmark', x + s * 11.25);
  add(lanes, 'gridline' + (bar ? ' gridline-bar' : ''), x);
  add(velocity, 'gridline', x);
  if (bar && b <= 12) {
    add(ruler, 'bar-no', x).textContent = 2 + b / 4;
  }
}
for (const area of [lanes, velocity]) {
  const shade = document.createElement('div');
  shade.className = 'beyond';
  area.appendChild(shade);
}

const NOTES = [
  [0, '#f01018', [36, 82, 149, 217, 262, 329, 397, 442, 509, 577, 622]],
  [0, '#dc1036', [115, 295, 475, 655]],
  [1, '#980860', [14, 104, 194, 284, 374, 464, 554, 644]],
  [2, '#840a70', [610]],
  [3, '#980860', [16, 104, 194, 284, 374, 466, 557, 646]],
  [5, '#5c0c9c', [14, 149, 509, 554, 644, 667]],
  [5, '#1808e8', [59, 599]],
  [5, '#b80c5c', [104, 126, 194, 239, 464, 486]],
  [5, '#ea1024', [284, 306, 329, 374, 419]],
  [8, '#980860', [14, 104, 194, 284, 374, 464, 554, 644]],
  [11, '#7a0a80', [2, 59, 115, 183, 239, 295, 363, 419, 475, 543, 599, 655]],
  [11, '#4c10a0', [592]],
  [14, '#840a70', [93, 149, 273, 329, 453, 509, 633]],
  [14, '#4c10a8', [584]],
  [17, '#980860', [14, 104, 194, 284, 374, 464, 554, 644]],
  [20, '#780a80', [126, 307, 487, 667]],
];
for (const [lane, color, xs] of NOTES) {
  for (const x of xs) {
    const note = add(lanes, 'note', x);
    note.style.top = lane * 16 + 1 + 'px';
    note.innerHTML = `<svg width="14" height="14" viewBox="0 0 14 14"><path d="M7 .7 13.300 7 7 13.300 .7 7z" fill="${color}" stroke="#2a0a2a" stroke-opacity=".7"/></svg>`;
  }
}

const STEMS = [
  [15, 36, 'purple'], [61, 9, 'blue'], [105, 57], [127, 57], [150, 30], [195, 59], [240, 61],
  [285, 73], [308, 76], [330, 79], [375, 80], [420, 65], [465, 57], [488, 53],
  [510, 35, 'purple'], [556, 36, 'purple'], [600, 9, 'blue'], [645, 36, 'purple'], [668, 36, 'purple'],
];
for (const [x, h, tone] of STEMS) {
  add(velocity, 'stem' + (tone ? ' stem-' + tone : ''), x).style.height = h + 'px';
}
```
